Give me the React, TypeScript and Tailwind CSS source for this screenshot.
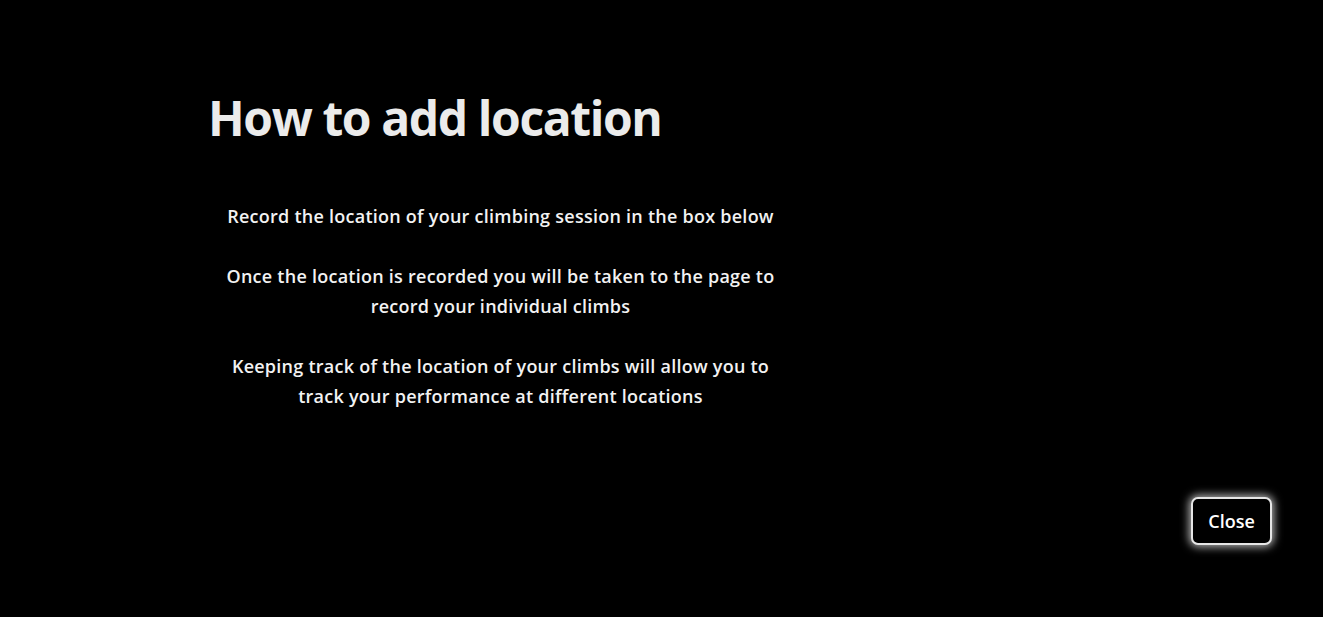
export default function App() {
  return (
    <div className="h-[617px] w-full bg-black flex flex-col font-['Open_Sans',sans-serif] text-white">
      <div className="pl-[208px] pt-[88px]">
        <h1 className="text-[48px] leading-[60px] font-bold tracking-[-1.4px] text-[#ebebeb]">How to add location</h1>
        <div className="w-[585px] mt-[53px] flex flex-col gap-[30px] text-center text-[18px] leading-[30px] font-semibold tracking-[0.25px] text-[#f2f2f2]">
          <p>Record the location of your climbing session in the box below</p>
          <p>
            Once the location is recorded you will be taken to the page to
            <br />
            record your individual climbs
          </p>
          <p>
            Keeping track of the location of your climbs will allow you to
            <br />
            track your performance at different locations
          </p>
        </div>
      </div>
      <div className="flex justify-end pr-[51px] mt-auto mb-[72px]">
        <button className="h-[48px] w-[81px] rounded-[7px] border-2 border-[#e6e6e6] bg-black pt-[1px] text-[18px] font-semibold text-white shadow-[0_0_8px_2px_rgba(255,255,255,0.7)]">
          Close
        </button>
      </div>
    </div>
  );
}
